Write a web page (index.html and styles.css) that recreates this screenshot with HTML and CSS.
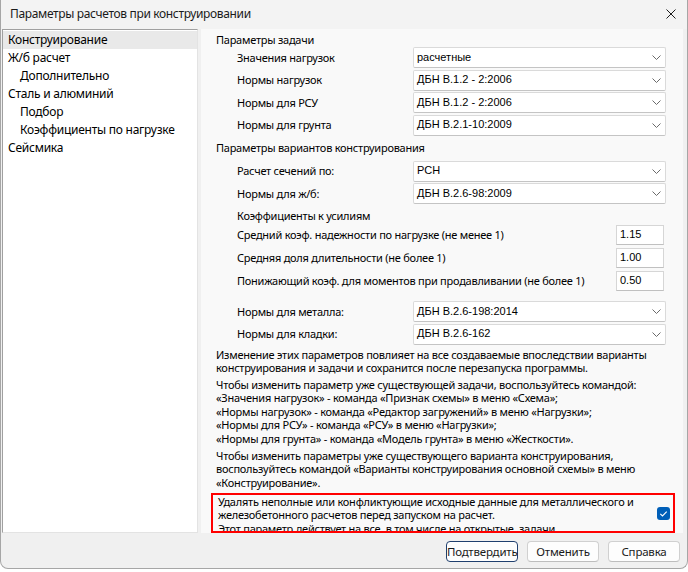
FILE: index.html
```html
<!DOCTYPE html>
<html lang="ru">
<head>
<meta charset="utf-8">
<title>Параметры расчетов при конструировании</title>
<link rel="stylesheet" href="styles.css">
</head>
<body>
<div class="window">
  <div class="titlebar">
    <span class="title">Параметры расчетов при конструировании</span>
    <svg class="close" width="10" height="10" viewBox="0 0 10 10"><path d="M0.5 0.5L9.5 9.5M9.5 0.5L0.5 9.5" stroke="#1b1b1b" stroke-width="1" fill="none"/></svg>
  </div>
  <div class="main">
    <div class="tree">
      <div class="tree-item selected">Конструирование</div>
      <div class="tree-item">Ж/б расчет</div>
      <div class="tree-item child">Дополнительно</div>
      <div class="tree-item">Сталь и алюминий</div>
      <div class="tree-item child">Подбор</div>
      <div class="tree-item child">Коэффициенты по нагрузке</div>
      <div class="tree-item">Сейсмика</div>
    </div>
    <div class="panel">
      <div class="heading">Параметры задачи</div>
      <div class="rows">
        <div class="row"><span class="label">Значения нагрузок</span><div class="combo"><span>расчетные</span><svg width="9" height="5" viewBox="0 0 9 5"><path d="M0.5 0.5L4.5 4.5L8.5 0.5" fill="none" stroke="#6a6a6a"/></svg></div></div>
        <div class="row"><span class="label">Нормы нагрузок</span><div class="combo"><span>ДБН В.1.2 - 2:2006</span><svg width="9" height="5" viewBox="0 0 9 5"><path d="M0.5 0.5L4.5 4.5L8.5 0.5" fill="none" stroke="#6a6a6a"/></svg></div></div>
        <div class="row"><span class="label">Нормы для РСУ</span><div class="combo"><span>ДБН В.1.2 - 2:2006</span><svg width="9" height="5" viewBox="0 0 9 5"><path d="M0.5 0.5L4.5 4.5L8.5 0.5" fill="none" stroke="#6a6a6a"/></svg></div></div>
        <div class="row"><span class="label">Нормы для грунта</span><div class="combo"><span>ДБН В.2.1-10:2009</span><svg width="9" height="5" viewBox="0 0 9 5"><path d="M0.5 0.5L4.5 4.5L8.5 0.5" fill="none" stroke="#6a6a6a"/></svg></div></div>
      </div>
      <div class="heading h2">Параметры вариантов конструирования</div>
      <div class="rows r2">
        <div class="row"><span class="label">Расчет сечений по:</span><div class="combo"><span>РСН</span><svg width="9" height="5" viewBox="0 0 9 5"><path d="M0.5 0.5L4.5 4.5L8.5 0.5" fill="none" stroke="#6a6a6a"/></svg></div></div>
        <div class="row"><span class="label">Нормы для ж/б:</span><div class="combo"><span>ДБН В.2.6-98:2009</span><svg width="9" height="5" viewBox="0 0 9 5"><path d="M0.5 0.5L4.5 4.5L8.5 0.5" fill="none" stroke="#6a6a6a"/></svg></div></div>
      </div>
      <div class="heading sub">Коэффициенты к усилиям</div>
      <div class="rows inputs">
        <div class="row"><span class="label">Средний коэф. надежности по нагрузке (не менее 1)</span><div class="field">1.15</div></div>
        <div class="row"><span class="label">Средняя доля длительности (не более 1)</span><div class="field">1.00</div></div>
        <div class="row"><span class="label">Понижающий коэф. для моментов при продавливании (не более 1)</span><div class="field">0.50</div></div>
      </div>
      <div class="rows r3">
        <div class="row"><span class="label">Нормы для металла:</span><div class="combo"><span>ДБН В.2.6-198:2014</span><svg width="9" height="5" viewBox="0 0 9 5"><path d="M0.5 0.5L4.5 4.5L8.5 0.5" fill="none" stroke="#6a6a6a"/></svg></div></div>
        <div class="row"><span class="label">Нормы для кладки:</span><div class="combo"><span>ДБН В.2.6-162</span><svg width="9" height="5" viewBox="0 0 9 5"><path d="M0.5 0.5L4.5 4.5L8.5 0.5" fill="none" stroke="#6a6a6a"/></svg></div></div>
      </div>
      <p class="note p1">Изменение этих параметров повлияет на все создаваемые впоследствии варианты<br>конструирования и задачи и сохранится после перезапуска программы.</p>
      <p class="note p2">Чтобы изменить параметр уже существующей задачи, воспользуйтесь командой:<br>«Значения нагрузок» - команда «Признак схемы» в меню «Схема»;<br>«Нормы нагрузок» - команда «Редактор загружений» в меню «Нагрузки»;<br>«Нормы для РСУ» - команда «РСУ» в меню «Нагрузки»;<br>«Нормы для грунта» - команда «Модель грунта» в меню «Жесткости».</p>
      <p class="note p3">Чтобы изменить параметры уже существующего варианта конструирования,<br>воспользуйтесь командой «Варианты конструирования основной схемы» в меню<br>«Конструирование».</p>
      <div class="highlight">
        <div class="hl-text">Удалять неполные или конфликтующие исходные данные для металлического и<br>железобетонного расчетов перед запуском на расчет.<br>Этот параметр действует на все, в том числе на открытые, задачи</div>
        <svg class="check" width="13" height="13" viewBox="0 0 13 13"><rect x="0" y="0" width="13" height="13" rx="3" fill="#005fb8"/><path d="M3.3 6.9L5.5 9L9.7 4.6" fill="none" stroke="#fff" stroke-width="1.1"/></svg>
      </div>
    </div>
  </div>
  <div class="footer">
    <button class="btn default">Подтвердить</button>
    <button class="btn">Отменить</button>
    <button class="btn">Справка</button>
  </div>
</div>
</body>
</html>
```

FILE: styles.css
```css
* { box-sizing: border-box; }
html, body { margin: 0; padding: 0; background: #ffffff; }
body {
  width: 688px;
  height: 572px;
  overflow: hidden;
  font-family: "Noto Sans", "Open Sans", sans-serif;
  color: #000;
}
.window {
  width: 688px;
  height: 569px;
  background: #f0f0f0;
  border: 1px solid #a6a6a6;
  border-top: none;
  border-radius: 0 0 8px 8px;
  display: flex;
  flex-direction: column;
  overflow: hidden;
}
.titlebar {
  height: 29px;
  flex: none;
  display: flex;
  align-items: center;
  justify-content: space-between;
  padding: 0 11px 2px 9px;
  background: #f3f3f3;
  font-size: 12px;
  letter-spacing: -0.35px;
}
.title { color: #1a1a1a; }
.main {
  height: 504px;
  flex: none;
  display: flex;
  gap: 3px;
  padding-left: 1px;
}
.tree {
  width: 196px;
  background: #fff;
  border: 1px solid;
  border-color: #a0a0a0 #e3e3e3 #e3e3e3 #a0a0a0;
  padding-top: 1px;
  font-size: 12px;
  letter-spacing: -0.25px;
}
.tree-item {
  height: 18px;
  line-height: 18px;
  padding-left: 5px;
  white-space: nowrap;
}
.tree-item.child { padding-left: 17px; }
.tree-item.selected { background: #e9e9e9; }
.panel {
  width: 482px;
  background: #f9f9f9;
  padding: 4px 17px 0 15px;
  overflow: hidden;
  font-size: 11px;
  line-height: 13.5px;
  letter-spacing: -0.25px;
  white-space: nowrap;
}
.heading { height: 14px; line-height: 14px; }
.heading.h2 { margin-top: 5px; }
.heading.sub { margin-top: 5px; padding-left: 21px; }
.rows {
  display: flex;
  flex-direction: column;
  gap: 1.5px;
}
.rows.r2 { margin-top: 6px; }
.rows.inputs { margin-top: 2px; gap: 3px; }
.rows.r3 { margin-top: 10px; }
.row {
  display: flex;
  align-items: center;
  justify-content: space-between;
  padding-left: 21px;
}
.combo {
  width: 253px;
  height: 21px;
  background: #fff;
  border: 1px solid #dadada;
  border-bottom-color: #c4c4c4;
  border-radius: 2px;
  display: flex;
  align-items: center;
  justify-content: space-between;
  padding: 0 4px 0 3px;
  font-family: "Liberation Sans", Arial, sans-serif;
  font-size: 11px;
  letter-spacing: 0;
}
.field {
  width: 48px;
  height: 20px;
  margin-right: 2px;
  background: #fff;
  border: 1px solid #d6d6d6;
  border-bottom-color: #c0c0c0;
  display: flex;
  align-items: center;
  padding-left: 3px;
  font-family: "Liberation Sans", Arial, sans-serif;
  font-size: 11px;
  letter-spacing: 0;
}
.note { margin: 0; }
.note.p1 { margin-top: 3px; }
.note.p2 { margin-top: 3px; }
.note.p3 { margin-top: 3.5px; }
.highlight {
  margin-top: 4px;
  margin-left: -5px;
  width: 464px;
  height: 40px;
  border: 2px solid #ff0000;
  padding: 0 3px 0 5px;
  display: flex;
  justify-content: space-between;
  overflow: hidden;
}
.hl-text { align-self: flex-start; line-height: 13.3px; }
.check { align-self: center; flex: none; }
.footer {
  flex: 1;
  display: flex;
  justify-content: flex-end;
  align-items: flex-start;
  gap: 9px;
  padding: 8px 7px 0 0;
}
.btn {
  width: 72px;
  height: 21px;
  background: #fdfdfd;
  border: 1px solid #d0d0d0;
  border-bottom-color: #bdbdbd;
  border-radius: 4px;
  font-family: "Noto Sans", sans-serif;
  font-size: 11.5px;
  letter-spacing: -0.2px;
  color: #1a1a1a;
  padding: 0;
}
.btn.default {
  border: 1px solid #1f3f6e;
  box-shadow: inset 0 0 0 1px #ffffff;
}
```
